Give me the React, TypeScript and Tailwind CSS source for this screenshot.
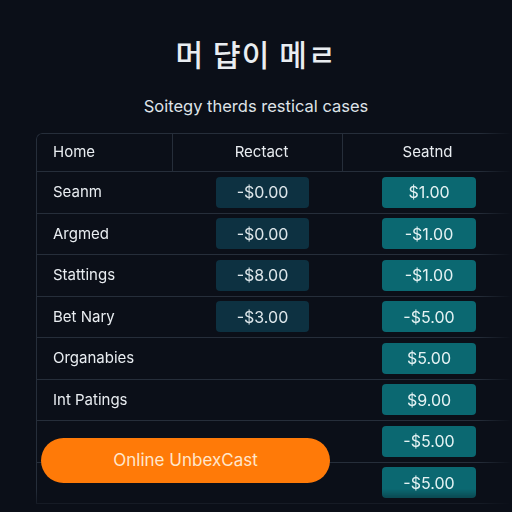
const rows = [
  { label: 'Seanm', mid: '-$0.00', right: '$1.00' },
  { label: 'Argmed', mid: '-$0.00', right: '-$1.00' },
  { label: 'Stattings', mid: '-$8.00', right: '-$1.00' },
  { label: 'Bet Nary', mid: '-$3.00', right: '-$5.00' },
  { label: 'Organabies', mid: '', right: '$5.00' },
  { label: 'Int Patings', mid: '', right: '$9.00' },
  { label: '', mid: '', right: '-$5.00' },
  { label: '', mid: '', right: '-$5.00' },
];

export default function App() {
  return (
    <div className="relative h-[512px] w-[512px] overflow-hidden bg-[#0b0f18] font-['Inter','Noto_Sans_CJK_KR',sans-serif] text-[#e9edf1]">
      <h1 className="pt-[35px] text-center text-[30px] font-medium leading-[40px] tracking-[1px]">
        머 댭이 메ㄹ
      </h1>
      <p className="mt-[19px] text-center text-[16.5px] leading-[24px] text-[#dfe3e8]">
        Soitegy therds restical cases
      </p>

      <div className="ml-[36px] mt-[15px] rounded-tl-[6px] border-l border-t border-[#262e3a] [mask-image:linear-gradient(to_right,#000_93%,transparent),linear-gradient(to_bottom,#000_96%,rgba(0,0,0,0.4))] [mask-composite:intersect]">
        <div className="grid h-[38px] grid-cols-[136px_170px_1fr] border-b border-[#262e3a] text-[15px]">
          <div className="flex items-center border-r border-[#262e3a] pl-[16px]">Home</div>
          <div className="flex items-center justify-center border-r border-[#262e3a] pl-[8px]">Rectact</div>
          <div className="flex items-center justify-center">Seatnd</div>
        </div>
        {rows.map((r, i) => (
          <div
            key={i}
            className="grid h-[41.5px] grid-cols-[136px_170px_1fr] border-b border-[#262e3a] text-[15px]"
          >
            <div className="flex items-center pl-[16px]">{r.label}</div>
            <div className="flex items-center pl-[43px]">
              {r.mid && (
                <div className="flex h-[31px] w-[93px] items-center justify-center rounded-[4px] bg-[#0d3141] text-[16px] text-[#dde6ea]">
                  {r.mid}
                </div>
              )}
            </div>
            <div className="flex items-center pl-[39px]">
              <div className="flex h-[31px] w-[94px] items-center justify-center rounded-[4px] bg-[#0b6871] text-[16px] text-[#e4f2f3]">
                {r.right}
              </div>
            </div>
          </div>
        ))}
      </div>

      <button className="absolute left-[41px] top-[438px] flex h-[45px] w-[289px] items-center justify-center rounded-full bg-[#ff7a08] text-[17px] text-[#ffe6cc]">
        Online UnbexCast
      </button>
    </div>
  );
}
